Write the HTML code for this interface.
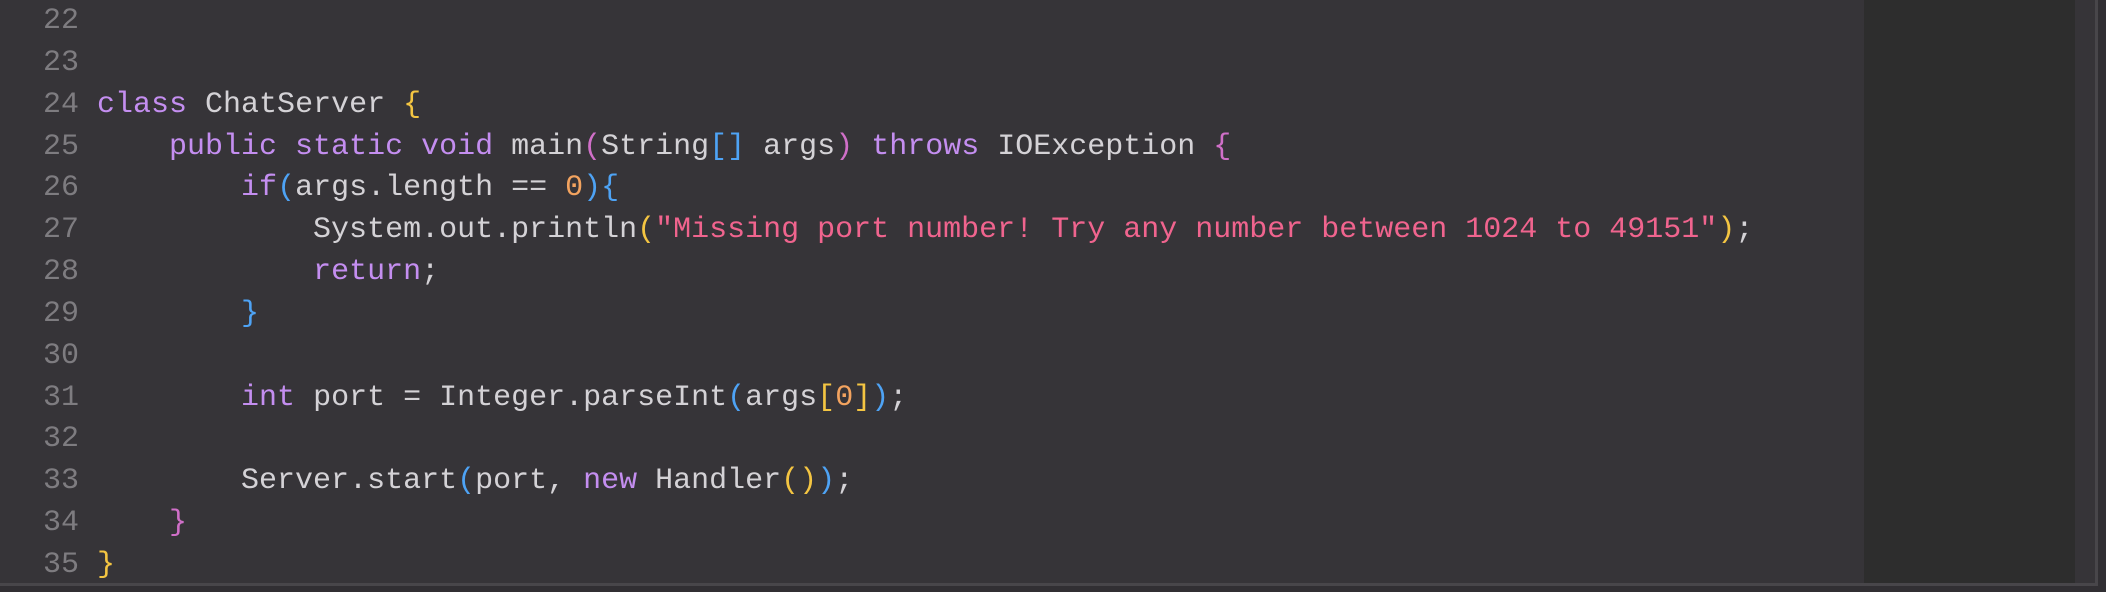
<!DOCTYPE html>
<html><head><meta charset="utf-8"><style>
html,body{margin:0;padding:0;width:2106px;height:592px;overflow:hidden;background:#312f33}
.ed{position:absolute;left:0;top:0;width:2095px;height:583px;background:#363438;border-right:3px solid #48464a;border-bottom:3px solid #48464a}
.mm{position:absolute;left:1864px;top:0;width:211px;height:583px;background:#2d2d2d}
pre{position:absolute;left:43px;top:1px;margin:0;font-family:"Liberation Mono",monospace;font-size:30px;line-height:41.85px;color:#d4d2d6}
.n{color:#7e7c80}.k{color:#c48ef0}.s{color:#f0648e}.y{color:#f4c542}.p{color:#d06fc8}.b{color:#4ea3f5}.o{color:#f3a35f}
</style></head><body>
<div class="ed"></div><div class="mm"></div>
<pre><span class="n">22</span>
<span class="n">23</span>
<span class="n">24</span> <span class="k">class</span> ChatServer <span class="y">{</span>
<span class="n">25</span>     <span class="k">public static void</span> main<span class="p">(</span>String<span class="b">[]</span> args<span class="p">)</span> <span class="k">throws</span> IOException <span class="p">{</span>
<span class="n">26</span>         <span class="k">if</span><span class="b">(</span>args.length == <span class="o">0</span><span class="b">){</span>
<span class="n">27</span>             System.out.println<span class="y">(</span><span class="s">"Missing port number! Try any number between 1024 to 49151"</span><span class="y">)</span>;
<span class="n">28</span>             <span class="k">return</span>;
<span class="n">29</span>         <span class="b">}</span>
<span class="n">30</span>
<span class="n">31</span>         <span class="k">int</span> port = Integer.parseInt<span class="b">(</span>args<span class="y">[</span><span class="o">0</span><span class="y">]</span><span class="b">)</span>;
<span class="n">32</span>
<span class="n">33</span>         Server.start<span class="b">(</span>port, <span class="k">new</span> Handler<span class="y">()</span><span class="b">)</span>;
<span class="n">34</span>     <span class="p">}</span>
<span class="n">35</span> <span class="y">}</span></pre>
</body></html>
